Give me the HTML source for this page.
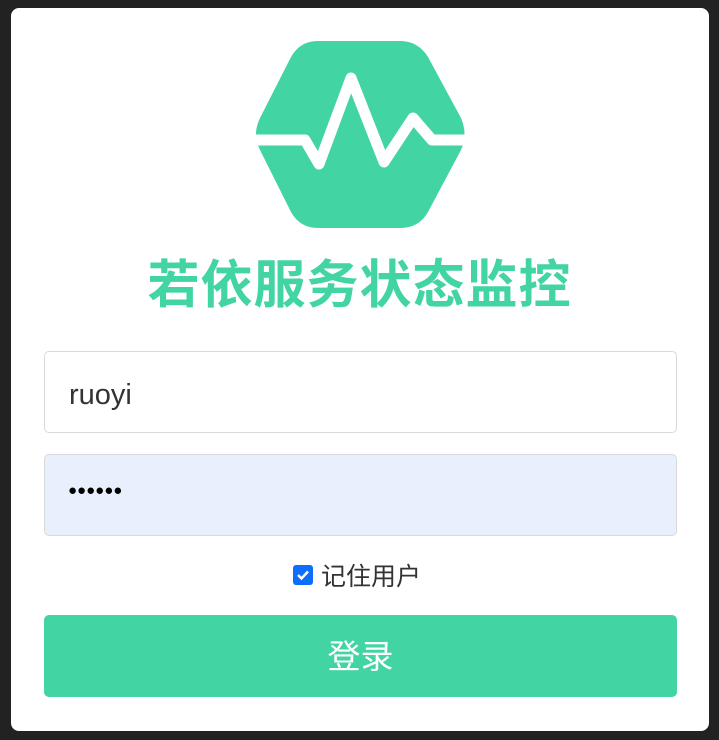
<!DOCTYPE html>
<html><head><meta charset="utf-8"><style>
html,body{margin:0;padding:0;width:719px;height:740px;background:#222;overflow:hidden}
.card{position:absolute;left:11px;top:8px;width:698px;height:723px;background:#fff;border-radius:8px}
.t{position:absolute;left:0;width:719px;text-align:center;top:253px;font:bold 52px "Liberation Sans","Noto Sans CJK SC",sans-serif;color:#42d4a3;line-height:66px;letter-spacing:1px}
.in{position:absolute;left:44px;width:631px;height:80px;border:1px solid #d9d9d9;border-radius:5px;box-sizing:content-box;font:29px "Liberation Sans","Noto Sans CJK SC",sans-serif;color:#333}
.cb{position:absolute;left:293px;top:565px;width:20px;height:20px;background:#0d6efd;border-radius:3px}
.lab{position:absolute;left:321px;top:560px;font:25px "Liberation Sans","Noto Sans CJK SC",sans-serif;color:#333;line-height:34px}
.btn{position:absolute;left:44px;top:615px;width:633px;height:82px;background:#42d4a3;border-radius:5px;color:#fff;font:33px "Liberation Sans","Noto Sans CJK SC",sans-serif;text-align:center;line-height:84px}
</style></head><body>
<div class="card"></div>
<svg style="position:absolute;left:0;top:0" width="719" height="260">
<path d="M318 41 L400 41 Q418 41 428 57 L461 118 Q468 134 461 150 L428 212 Q419 228 400 228 L318 228 Q300 228 291 212 L260 150 Q252 134 260 118 L291 57 Q300 41 318 41Z" fill="#42d4a3"/>
<polyline points="255,140 305,140 319,164 351,78 384,162 413,118 432,140 465,140" fill="none" stroke="#fff" stroke-width="11" stroke-linejoin="round" stroke-linecap="round"/>
</svg>
<div class="t">若依服务状态监控</div>
<div class="in" style="top:351px;background:#fff"><span style="position:absolute;left:24px;top:27px">ruoyi</span></div>
<div class="in" style="top:454px;background:#e8f0fe"><span style="position:absolute;left:23px;top:27px;font-size:15px;color:#000;letter-spacing:0px">●●●●●●</span></div>
<div class="cb"><svg width="20" height="20"><path d="M5 10 L8.5 13.5 L15 6.5" fill="none" stroke="#fff" stroke-width="2.5"/></svg></div>
<div class="lab">记住用户</div>
<div class="btn">登录</div>
</body></html>
